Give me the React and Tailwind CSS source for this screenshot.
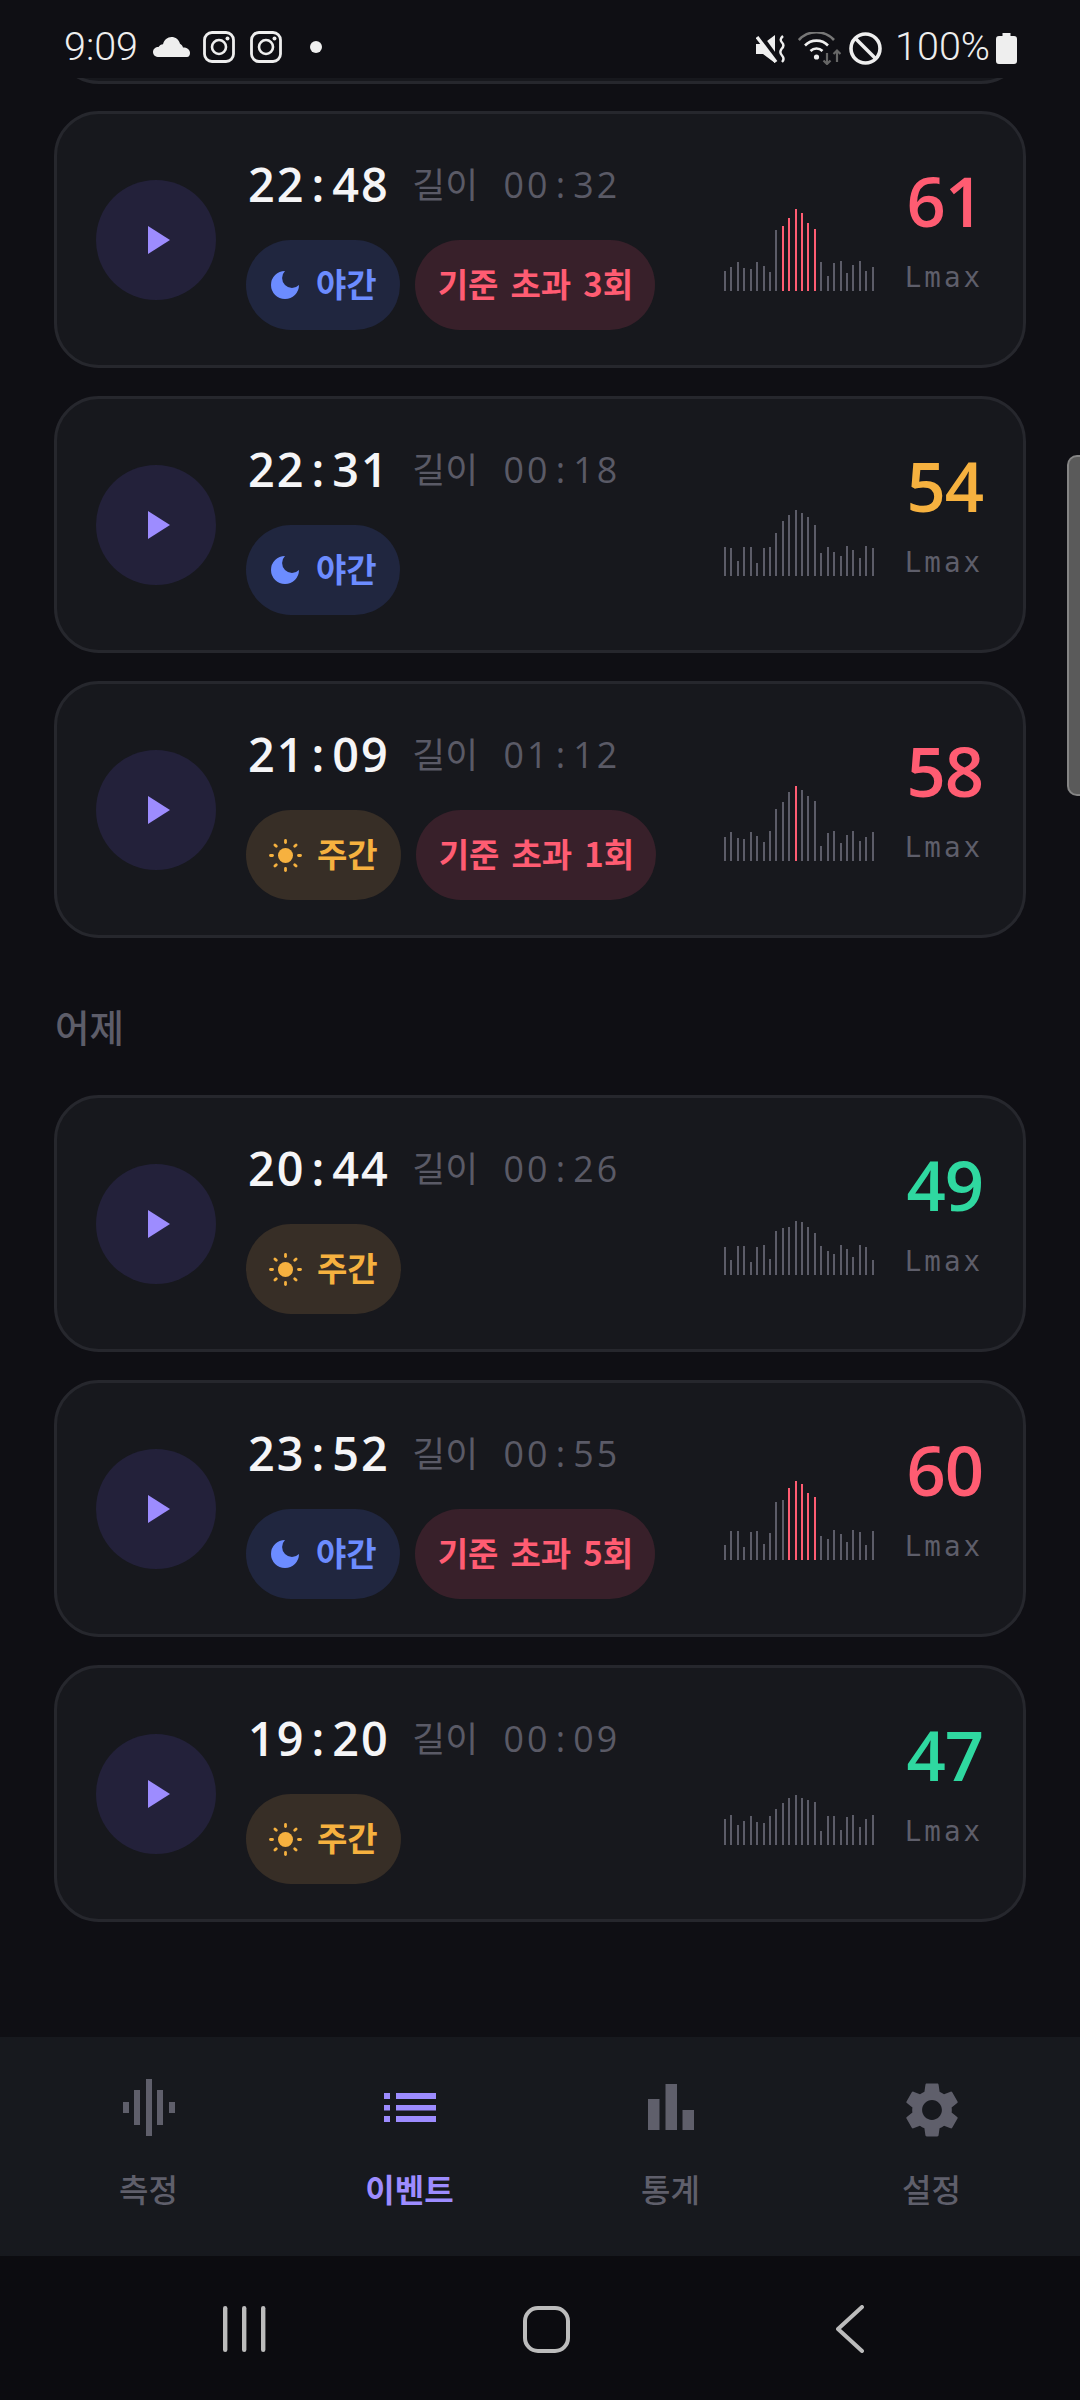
import React from "react";

const RED = "#ff5c72", AMBER = "#f6b13f", GREEN = "#2fd8a0";

const cards = [
  { t: ["22", "48"], d: ["00", "32"], mode: "n", over: 3, v: 61, c: RED, red: [9, 14],
    h: [20,24,29,23,22,29,25,19,61,65,73,82,78,68,62,29,15,28,30,18,26,30,20,24] },
  { t: ["22", "31"], d: ["00", "18"], mode: "n", v: 54, c: AMBER,
    h: [29,28,15,29,29,13,28,29,43,55,61,66,63,59,51,23,29,24,20,30,26,18,30,28] },
  { t: ["21", "09"], d: ["01", "12"], mode: "d", over: 1, v: 58, c: RED, red: [11, 11],
    h: [24,29,23,22,29,25,19,30,52,59,69,75,71,65,60,15,28,30,18,26,30,20,24,29] },
  { t: ["20", "44"], d: ["00", "26"], mode: "d", v: 49, c: GREEN,
    h: [28,15,29,29,13,28,30,16,44,47,48,54,53,48,42,29,24,21,30,26,18,30,28,15] },
  { t: ["23", "52"], d: ["00", "55"], mode: "n", over: 5, v: 60, c: RED, red: [10, 14],
    h: [15,29,29,13,28,29,16,27,58,60,72,79,76,67,63,24,21,30,26,18,30,28,15,29] },
  { t: ["19", "20"], d: ["00", "09"], mode: "d", v: 47, c: GREEN,
    h: [26,30,20,24,29,23,22,29,36,42,47,50,47,45,43,14,29,29,15,28,30,18,26,30] },
];

function Moon() {
  return (
    <svg width="28" height="28" viewBox="3 3 18 18" className="mt-[2px] shrink-0">
      <path d="M12 3a6 6 0 0 0 9 9 9 9 0 1 1-9-9Z" fill="#6c8cff" />
    </svg>
  );
}

function Sun() {
  const rays = [0, 45, 90, 135, 180, 225, 270, 315];
  return (
    <svg width="33" height="33" viewBox="0 0 33 33" className="mt-[2px] shrink-0">
      <circle cx="16.5" cy="16.5" r="7.5" fill={AMBER} />
      {rays.map((a) => (
        <line key={a} x1="16.5" y1="3.5" x2="16.5" y2="1.5" stroke={AMBER} strokeWidth="2.8" strokeLinecap="round" transform={`rotate(${a} 16.5 16.5)`} />
      ))}
    </svg>
  );
}

function Card({ card, className = "" }) {
  return (
    <div className={`flex h-[257px] rounded-[45px] border-[3px] border-[#26272d] bg-[#17181d] pl-[39px] ${className}`}>
      <div className="flex h-[120px] w-[120px] shrink-0 items-center justify-center self-center rounded-full bg-[#23213a]">
        <svg width="22" height="28" viewBox="0 0 22 28" className="ml-[6px]">
          <path d="M0 0 L22 14 L0 28 Z" fill="#9d8cff" />
        </svg>
      </div>
      <div className="ml-[30px] w-[478px] shrink-0 pt-[43px]">
        <div className="flex h-[54px] items-center font-['Open_Sans','Noto_Sans_CJK_KR',sans-serif]">
          <span className="ml-[2px] text-[46.75px] font-semibold leading-[54px] tracking-[2px] text-[#f5f5f7]">
            {card.t[0]}<span className="mx-[6px]">:</span>{card.t[1]}
          </span>
          <span className="ml-[22.5px] text-[35.75px] leading-[54px] text-[#5a5a66]">
            길이
            <span className="ml-[25.5px] tracking-[3.1px]">
              {card.d[0]}<span className="mx-[5px]">:</span>{card.d[1]}
            </span>
          </span>
        </div>
        <div className="mt-[29px] flex gap-[15px]">
          {card.mode === "n" ? (
            <div className="flex h-[90px] items-center gap-[17px] rounded-full bg-[#20263f] pb-[2px] pl-[25px] pr-[23px] text-[33px] font-semibold text-[#6c8cff]">
              <Moon />야간
            </div>
          ) : (
            <div className="flex h-[90px] items-center gap-[15px] rounded-full bg-[#372e26] pb-[2px] pl-[23px] pr-[23px] text-[33px] font-semibold text-[#f6b13f]">
              <Sun />주간
            </div>
          )}
          {card.over ? (
            <div className="flex h-[90px] items-center rounded-full bg-[#38202a] pb-[2px] pl-[23px] pr-[22px] text-[33px] font-semibold text-[#ff5c72] [word-spacing:4.5px]">
              기준 초과 {card.over}회
            </div>
          ) : null}
        </div>
      </div>
      <div className="mt-[95px] flex h-[82px] w-[150px] shrink-0 items-end justify-between">
        {card.h.map((h, i) => (
          <div
            key={i}
            className={`w-[2px] ${card.red && i >= card.red[0] && i <= card.red[1] ? "bg-[#ff5c72]" : "bg-[#5c5c68]"}`}
            style={{ height: h }}
          />
        ))}
      </div>
      <div className="flex w-[109px] shrink-0 flex-col items-end pt-[47px]">
        <div className="font-['Open_Sans',sans-serif] text-[68.75px] font-semibold leading-[80px] tracking-[-1px]" style={{ color: card.c }}>
          {card.v}
        </div>
        <div className="mt-[20px] font-['DejaVu_Sans_Mono',monospace] text-[27.5px] leading-[32px] tracking-[3px] text-[#5e5e6a]">
          Lmax
        </div>
      </div>
    </div>
  );
}

function StatusBar() {
  const ig = (
    <svg width="32" height="32" viewBox="0 0 32 32" fill="none" stroke="#eeeeee" className="block">
      <rect x="1.5" y="1.5" width="29" height="29" rx="7.5" strokeWidth="2.8" />
      <circle cx="16" cy="16" r="7" strokeWidth="2.6" />
      <circle cx="24.5" cy="7.5" r="2" fill="#eeeeee" stroke="none" />
    </svg>
  );
  return (
    <div className="relative z-10 flex h-[78px] shrink-0 items-start justify-between bg-[#0f0f14] pt-[29px] pl-[64px] pr-[63px] font-['Roboto',sans-serif] text-[#eeeeee]">
      <div className="flex items-center">
        <span className="text-[39.5px] font-light leading-[36px]">9:09</span>
        <svg width="37" height="20" viewBox="0 0 37 20" className="ml-[15px]">
          <path d="M6 20 C2.5 20 0 18 0 15 C0 12 2.5 10 5.5 10 C6.5 8.5 8 7.5 10 7.3 C11 3 14.5 0 18.5 0 C22.5 0 26 2.7 27 6.8 C28.5 7.5 29.5 9 30 10.5 C34 10.5 37 12.5 37 16 C37 18 36 20 34 20 Z" fill="#eeeeee" />
        </svg>
        <span className="ml-[13px]">{ig}</span>
        <span className="ml-[15px]">{ig}</span>
        <span className="ml-[28px] h-[12px] w-[12px] rounded-full bg-[#eeeeee]" />
      </div>
      <div className="flex items-center">
        <svg width="30" height="28" viewBox="0 0 30 28" className="mr-[12px] mt-[4px]">
          <path d="M0 9 H7 L19 0 V28 L7 19 H0 Z" fill="#eeeeee" />
          <line x1="3" y1="-1" x2="24" y2="28" stroke="#0f0f14" strokeWidth="5" />
          <line x1="1" y1="2" x2="20" y2="27" stroke="#eeeeee" strokeWidth="3.4" />
          <path d="M27 1 Q23 4.5 26 7.5 Q29 10.5 25.5 14 Q23 17.5 26 20.5 Q29 24 26 27" fill="none" stroke="#eeeeee" strokeWidth="2.4" />
        </svg>
        <svg width="43" height="33" viewBox="0 0 43 33" fill="none" className="mr-[8px] mt-[3px]">
          <path d="M0.8 8 A24 24 0 0 1 36 8" stroke="#777777" strokeWidth="2.6" />
          <path d="M7 13.5 A16 16 0 0 1 30 13.5" stroke="#eeeeee" strokeWidth="2.6" />
          <path d="M12.5 19 A8.5 8.5 0 0 1 24.5 19" stroke="#eeeeee" strokeWidth="2.6" />
          <circle cx="18.5" cy="25" r="2.6" fill="#eeeeee" />
          <path d="M29 21 V32 M25.5 28.5 L29 32 L32.5 28.5" stroke="#666666" strokeWidth="2.2" />
          <path d="M39 30 V18.5 M35.5 22 L39 18.5 L42.5 22" stroke="#666666" strokeWidth="2.2" />
        </svg>
        <svg width="33" height="33" viewBox="0 0 33 33" fill="none" stroke="#eeeeee" strokeWidth="3.6" className="mr-[13px] mt-[2px]">
          <circle cx="16.5" cy="16.5" r="14.5" />
          <line x1="6.5" y1="6.5" x2="26.5" y2="26.5" />
        </svg>
        <span className="text-[39.5px] font-light leading-[36px]">100%</span>
        <svg width="21" height="31" viewBox="0 0 21 31" className="ml-[6px] mt-[2px]">
          <path d="M6.5 0 H14.5 V3 H18 Q21 3 21 6 V28 Q21 31 18 31 H3 Q0 31 0 28 V6 Q0 3 3 3 H6.5 Z" fill="#eeeeee" />
        </svg>
      </div>
    </div>
  );
}

function NavItem({ label, active, children }) {
  return (
    <div className="flex flex-col items-center">
      <div className="flex h-[66px] w-[66px] items-center justify-center">{children}</div>
      <div className={`mt-[23px] text-[32px] leading-[44px] ${active ? "font-semibold text-[#9d8cff]" : "font-medium text-[#5f5f6b]"}`}>{label}</div>
    </div>
  );
}

function BottomNav() {
  return (
    <div className="grid h-[219px] shrink-0 grid-cols-4 bg-[#17191e] px-[18px] pt-[40px]">
      <NavItem label="측정">
        <svg width="66" height="66" viewBox="0 0 66 66" fill="#5f5f6b">
          <rect x="7" y="25" width="6" height="11" />
          <rect x="18" y="13" width="6" height="35" />
          <rect x="30" y="2" width="6" height="57" />
          <rect x="41" y="13" width="6" height="35" />
          <rect x="53" y="25" width="6" height="11" />
        </svg>
      </NavItem>
      <NavItem label="이벤트" active>
        <svg width="66" height="66" viewBox="0 0 66 66" fill="#9d8cff">
          <rect x="7" y="16" width="6" height="6" />
          <rect x="7" y="28" width="6" height="5.5" />
          <rect x="7" y="39" width="6" height="6" />
          <rect x="19" y="16" width="40" height="6" />
          <rect x="19" y="28" width="40" height="5.5" />
          <rect x="19" y="39" width="40" height="6" />
        </svg>
      </NavItem>
      <NavItem label="통계">
        <svg width="66" height="66" viewBox="0 0 66 66" fill="#5f5f6b">
          <rect x="10" y="22" width="11.5" height="31" />
          <rect x="27.5" y="7" width="11.5" height="46" />
          <rect x="44.5" y="33" width="11.5" height="20" />
        </svg>
      </NavItem>
      <NavItem label="설정">
        <svg width="66" height="66" viewBox="0 0 24 24" fill="#5f5f6b">
          <path d="M19.14 12.94c.04-.3.06-.61.06-.94 0-.32-.02-.64-.07-.94l2.03-1.58c.18-.14.23-.41.12-.61l-1.92-3.32c-.12-.22-.37-.29-.59-.22l-2.39.96c-.5-.38-1.03-.7-1.62-.94l-.36-2.54c-.04-.24-.24-.41-.48-.41h-3.84c-.24 0-.43.17-.47.41l-.36 2.54c-.59.24-1.13.57-1.62.94l-2.39-.96c-.22-.08-.47 0-.59.22L2.74 8.87c-.12.21-.08.47.12.61l2.03 1.58c-.05.3-.09.63-.09.94s.02.64.07.94l-2.03 1.58c-.18.14-.23.41-.12.61l1.92 3.32c.12.22.37.29.59.22l2.39-.96c.5.38 1.03.7 1.62.94l.36 2.54c.05.24.24.41.48.41h3.84c.24 0 .44-.17.47-.41l.36-2.54c.59-.24 1.13-.56 1.62-.94l2.39.96c.22.08.47 0 .59-.22l1.92-3.32c.12-.22.07-.47-.12-.61l-2.01-1.58zM12 15.6c-1.98 0-3.6-1.62-3.6-3.6s1.62-3.6 3.6-3.6 3.6 1.62 3.6 3.6-1.62 3.6-3.6 3.6z" />
        </svg>
      </NavItem>
    </div>
  );
}

function SystemNav() {
  return (
    <div className="grid h-[144px] shrink-0 grid-cols-[303px_303px_303px] bg-[#0c0c10] pl-[92px] pt-[2px]">
      <div className="flex items-center justify-center">
        <svg width="44" height="48" viewBox="0 0 44 48" fill="#bcbcbc">
          <rect x="1" y="1" width="4.4" height="46" rx="2.2" />
          <rect x="20" y="1" width="4.4" height="46" rx="2.2" />
          <rect x="39" y="1" width="4.4" height="46" rx="2.2" />
        </svg>
      </div>
      <div className="flex items-center justify-center">
        <div className="h-[47px] w-[47px] rounded-[15px] border-[4px] border-[#bcbcbc]" />
      </div>
      <div className="flex items-center justify-center">
        <svg width="28" height="48" viewBox="0 0 28 48" fill="none" stroke="#bcbcbc" strokeWidth="4" strokeLinecap="round" strokeLinejoin="round">
          <path d="M26 2 L2 24 L26 46" />
        </svg>
      </div>
    </div>
  );
}

export default function App() {
  return (
    <div className="flex h-[2400px] w-[1080px] flex-col overflow-hidden bg-[#0f0f14] font-['Noto_Sans_CJK_KR',sans-serif]">
      <StatusBar />
      <div className="relative flex-1 overflow-hidden">
        <div className="flex flex-col px-[54px]">
          <div className="mt-[-251px] h-[257px] shrink-0 rounded-[45px] border-[3px] border-[#26272d] bg-[#17181d]" />
          <div className="mt-[27px] flex flex-col gap-[28px]">
            {cards.slice(0, 3).map((c, i) => <Card key={i} card={c} />)}
          </div>
          <div className="mb-[43px] ml-[1px] mt-[62px] text-[37.5px] font-medium leading-[52px] text-[#5d5d69]">어제</div>
          <div className="flex flex-col gap-[28px]">
            {cards.slice(3).map((c, i) => <Card key={i} card={c} />)}
          </div>
        </div>
        <div className="absolute right-0 top-[377px] h-[341px] w-[13px] rounded-l-[10px] border-b-[2px] border-l-[2px] border-t-[2px] border-[#858585] bg-[#5a5a5a]" />
      </div>
      <BottomNav />
      <SystemNav />
    </div>
  );
}
